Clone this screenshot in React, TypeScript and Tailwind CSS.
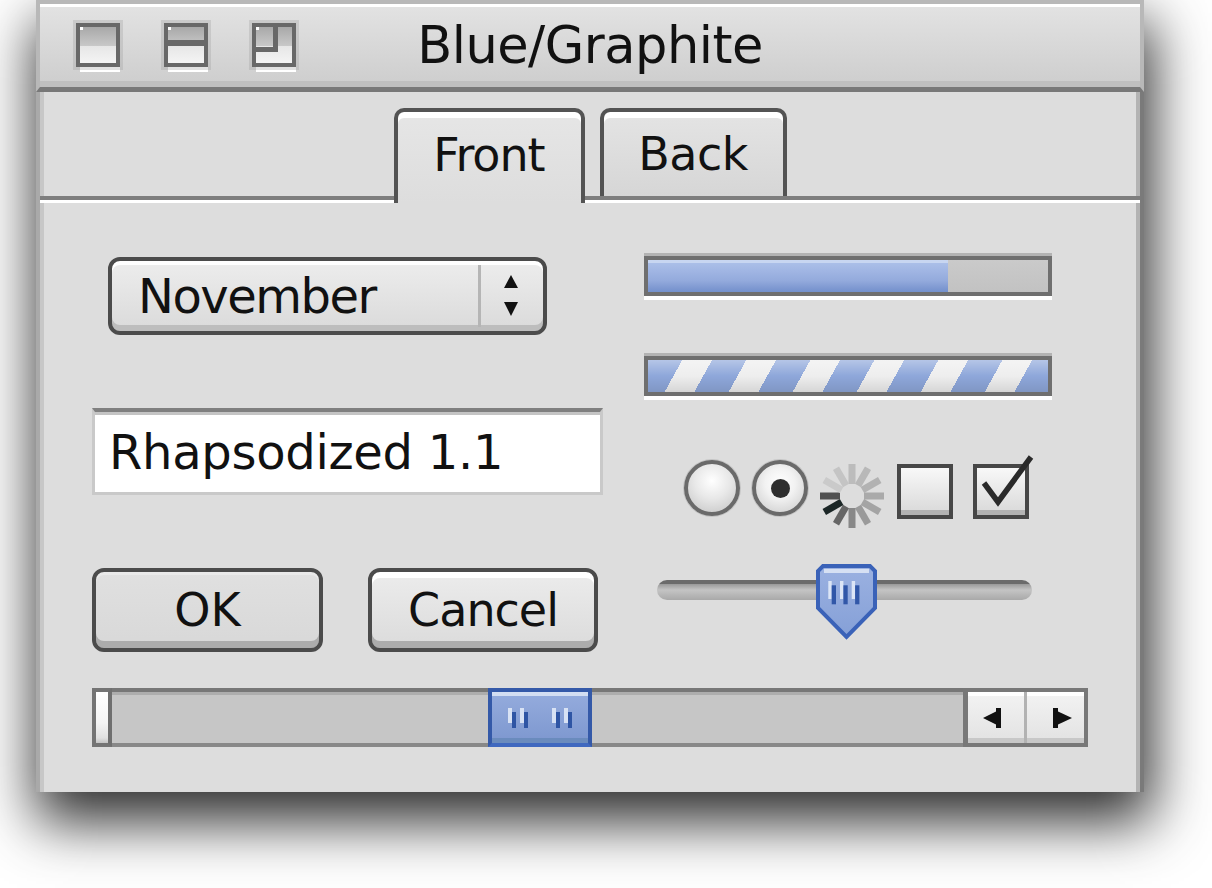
import React from "react";

function WinIcon({ kind }: { kind: 1 | 2 | 3 }) {
  return (
    <div className="flex flex-col items-end">
      <div className="relative w-[44px] h-[44px] border-4 border-[#686868] bg-[linear-gradient(#a8a8a8,#c8c8c8_52%,#e6e6e6_52%,#f4f4f4)] shadow-[0_0_0_3px_rgba(150,150,150,0.28)]">
        <div className="absolute left-0 top-0 w-[3px] h-[3px] bg-white" />
        {kind === 2 && <div className="absolute left-0 right-0 top-[13px] h-[6px] bg-[#686868]" />}
        {kind === 3 && (
          <div className="absolute left-0 top-0 w-[22px] h-[25px] border-r-[5px] border-b-[5px] border-[#686868]" />
        )}
      </div>
      <div className="w-[40px] h-[5px] bg-white" />
    </div>
  );
}

function TitleBar() {
  return (
    <div className="h-[92px] shrink-0 border-t-4 border-x-4 border-[#b8b8b8] border-b-[5px] border-b-[#787878] bg-[linear-gradient(#e3e3e3,#cdcdcd)] shadow-[inset_0_3px_0_#ffffff,inset_0_-6px_0_#bfbfbf] grid grid-cols-[1fr_auto_1fr] items-center">
      <div className="flex gap-[44px] pl-[36px] mt-[4px]">
        <WinIcon kind={1} />
        <WinIcon kind={2} />
        <WinIcon kind={3} />
      </div>
      <div className="text-[51px] leading-none tracking-[-0.5px]">Blue/Graphite</div>
      <div />
    </div>
  );
}

function TabStrip() {
  return (
    <div className="h-[111px] shrink-0 flex flex-col">
      <div className="flex-1 flex items-end justify-center gap-[15px]">
        <div className="relative z-10 w-[191px] h-[95px] mb-[-7px] pb-[6px] border-t-4 border-x-4 border-[#535353] rounded-t-[10px] bg-[linear-gradient(#e6e6e6,#dddddd)] shadow-[inset_0_6px_0_#ffffff] flex items-center justify-center text-[46px] leading-none tracking-[-1px]">
          Front
        </div>
        <div className="w-[187px] h-[88px] border-t-4 border-x-4 border-[#535353] rounded-t-[10px] bg-[linear-gradient(#e4e4e4,#d6d6d6)] shadow-[inset_0_6px_0_#ffffff] flex items-center justify-center text-[46px] leading-none tracking-[-0.5px]">
          Back
        </div>
      </div>
      <div className="h-[4px] bg-[#7e7e7e]" />
      <div className="h-[3px] bg-white" />
    </div>
  );
}

function Popup() {
  return (
    <div className="self-start ml-[16px] mt-[4px] w-[439px] h-[78px] border-4 border-[#4b4b4b] rounded-[12px] bg-[linear-gradient(#ededed,#dadada)] shadow-[inset_0_4px_0_#ffffff,inset_0_-6px_0_#bdbdbd] flex items-center">
      <div className="w-[366px] pl-[26px] text-[48px] leading-none tracking-[-1.5px]">November</div>
      <div className="w-[3px] self-stretch my-[4px] bg-[#b5b5b5]" />
      <div className="flex-1 flex justify-center pr-[2px]">
        <svg width="18" height="44" viewBox="0 0 18 44">
          <polygon points="9,1 16,14 2,14" fill="#111" />
          <polygon points="2,28 16,28 9,42" fill="#111" />
        </svg>
      </div>
    </div>
  );
}

function TextField() {
  return (
    <div className="mt-[73px] w-[511px] h-[87px] bg-white border-x-[3px] border-b-[3px] border-[#c9c9c9] border-t-4 border-t-[#7f7f7f] shadow-[inset_0_3px_0_#c4c4c4] flex items-center pl-[14px] text-[48px] leading-none tracking-[-0.3px]">
      Rhapsodized 1.1
    </div>
  );
}

function Buttons() {
  return (
    <div className="mt-[73px] flex gap-[45px]">
      <div className="w-[231px] h-[84px] border-4 border-[#4b4b4b] rounded-[12px] bg-[linear-gradient(#e0e0e0,#d8d8d8)] shadow-[inset_0_3px_0_#e9e9e9,inset_0_-7px_0_#acacac] flex items-center justify-center text-[46px] leading-none">
        OK
      </div>
      <div className="w-[230px] h-[84px] border-4 border-[#4b4b4b] rounded-[12px] bg-[linear-gradient(#ececec,#dbdbdb)] shadow-[inset_0_6px_0_#ffffff,inset_0_-7px_0_#acacac] flex items-center justify-center text-[46px] leading-none tracking-[-1px]">
        Cancel
      </div>
    </div>
  );
}

function Progress() {
  return (
    <div className="w-[408px] flex flex-col">
      <div className="h-[3px] bg-[#b3b3b3]" />
      <div className="h-[40px] border-4 border-[#6f6f6f] flex bg-[linear-gradient(#cacaca,#c2c2c2)]">
        <div className="w-[300px] bg-[linear-gradient(#c8d6f1_0%,#c8d6f1_9%,#abbfe8_9%,#a0b5e3_35%,#93aadc_65%,#7e98d1_88%,#7391cd_100%)]" />
      </div>
      <div className="h-[4px] bg-white" />
    </div>
  );
}

function Indeterminate() {
  return (
    <div className="mt-[53px] w-[408px] flex flex-col">
      <div className="h-[3px] bg-[#b3b3b3]" />
      <div className="h-[40px] border-4 border-[#6f6f6f] bg-[linear-gradient(rgba(255,255,255,0.35),rgba(255,255,255,0)_50%,rgba(0,0,0,0.1)),repeating-linear-gradient(119deg,#8ea7da_0px,#8ea7da_30px,#eeeeee_30px,#eeeeee_56px)]" />
      <div className="h-[4px] bg-white" />
    </div>
  );
}

const spokeColors = [
  "#bcbcbc",
  "#b8b8b8",
  "#b2b2b2",
  "#aaaaaa",
  "#a4a4a4",
  "#9a9a9a",
  "#888888",
  "#666666",
  "#1b2626",
  "#505050",
  "#cacaca",
  "#c4c4c4",
];

function Controls() {
  return (
    <div className="mt-[57px] h-[72px] flex items-start pl-[40px]">
      <div className="mt-[3px] w-[56px] h-[56px] rounded-full border-4 border-[#6a6a6a] bg-[radial-gradient(circle_at_50%_35%,#ffffff,#e8e8e8_45%,#c2c2c2)] shadow-[0_0_0_1px_#c4c4c4]" />
      <div className="ml-[12px] mt-[3px] w-[56px] h-[56px] rounded-full border-4 border-[#6a6a6a] bg-[radial-gradient(circle_at_50%_40%,#ffffff,#f2f2f2_40%,#c8c8c8)] shadow-[0_0_0_1px_#c4c4c4] flex items-center justify-center">
        <div className="w-[19px] h-[19px] rounded-full bg-[#2e2e2e]" />
      </div>
      <svg className="ml-[12px] mt-[6px]" width="64" height="66" viewBox="-32 -33 64 66">
        {spokeColors.map((c, i) => (
          <rect key={i} x={-3.5} y={-32} width={7} height={20} fill={c} transform={`rotate(${i * 30})`} />
        ))}
      </svg>
      <div className="ml-[13px] mt-[7px] w-[56px] h-[55px] border-4 border-[#474747] bg-[linear-gradient(#f8f8f8,#d8d8d8)] shadow-[inset_0_-5px_0_#b3b3b3]" />
      <div className="relative ml-[20px] mt-[7px] w-[56px] h-[55px] border-4 border-[#474747] bg-[linear-gradient(#f8f8f8,#d8d8d8)] shadow-[inset_0_-5px_0_#b3b3b3]">
        <svg className="absolute left-[-4px] top-[-14px]" width="64" height="66" viewBox="0 0 64 66">
          <polyline points="11,29 25,48 58,3" fill="none" stroke="#2a2a2a" strokeWidth="5.5" strokeLinejoin="miter" />
        </svg>
      </div>
    </div>
  );
}

function Slider() {
  return (
    <div className="mt-[35px] ml-[13px] relative w-[375px] h-[76px]">
      <div className="absolute left-0 right-0 top-[16px] h-[20px] rounded-full bg-[linear-gradient(#6b6b6b_0%,#6b6b6b_22%,#9c9c9c_22%,#c4c4c4_50%,#a9a9a9_100%)]" />
      <svg className="absolute left-[159px] top-0" width="61" height="76" viewBox="0 0 61 76">
        <defs>
          <linearGradient id="thumbFill" x1="0" y1="0" x2="0" y2="1">
            <stop offset="0" stopColor="#9bb1e1" />
            <stop offset="1" stopColor="#85a0d7" />
          </linearGradient>
        </defs>
        <polygon points="7,2 54,2 59,7 59,44 30.5,73 2,44 2,7" fill="url(#thumbFill)" stroke="#3a62b8" strokeWidth="4" strokeLinejoin="miter" />
        <rect x="8" y="5" width="45" height="4" fill="#d6e0f3" />
        <rect x="12.3" y="17" width="3.4" height="18" fill="#dce5f6" />
        <rect x="15.7" y="21.3" width="4.3" height="19" fill="#3157a8" />
        <rect x="24" y="17" width="3.4" height="18" fill="#dce5f6" />
        <rect x="27.4" y="21.3" width="4.3" height="19" fill="#3157a8" />
        <rect x="35.7" y="17" width="3.4" height="18" fill="#dce5f6" />
        <rect x="39.1" y="21.3" width="4.3" height="19" fill="#3157a8" />
      </svg>
    </div>
  );
}

function Grip() {
  return (
    <div className="relative h-[20px] flex">
      <div className="w-[4px] h-[15px] self-start bg-[#d8e2f4]" />
      <div className="w-[4px] h-[16px] self-end bg-[#2f55a4]" />
      <div className="ml-[4px] w-[4px] h-[15px] self-start bg-[#d8e2f4]" />
      <div className="w-[4px] h-[16px] self-end bg-[#2f55a4]" />
    </div>
  );
}

function ScrollBar() {
  return (
    <div className="mt-[36px] w-[996px] h-[59px] flex">
      <div className="w-[20px] border-4 border-[#747474] border-r-[#6f6f6f] bg-[linear-gradient(#ffffff,#f4f4f4_60%,#e0e0e0_90%,#c4c4c4)]" />
      <div className="w-[376px] border-t-4 border-t-[#777777] border-b-4 border-b-[#888888] bg-[#c6c6c6] shadow-[inset_0_3px_0_#adadad]" />
      <div className="w-[104px] border-4 border-[#3459a8] border-b-[#3f68bf] bg-[linear-gradient(#95acdd,#7d97cf)] shadow-[inset_0_4px_0_#d3def2,inset_0_-5px_0_#6a8bbd] flex items-center justify-center gap-[24px]">
        <Grip />
        <Grip />
      </div>
      <div className="flex-1 border-t-4 border-t-[#777777] border-b-4 border-b-[#888888] bg-[#c6c6c6] shadow-[inset_0_3px_0_#adadad]" />
      <div className="w-[125px] flex border-t-4 border-b-4 border-l-[5px] border-r-4 border-[#787878]">
        <div className="w-[56px] flex items-center pl-[15px] bg-[linear-gradient(#f3f3f3,#e2e2e2)] shadow-[inset_0_4px_0_#ffffff,inset_0_-5px_0_#c8c8c8]">
          <svg width="20" height="20" viewBox="0 0 20 20">
            <polygon points="0,10 14,3 14,17" fill="#111" />
            <rect x="13" y="0" width="5" height="20" fill="#111" />
          </svg>
        </div>
        <div className="w-[3px] bg-[#b2b2b2]" />
        <div className="flex-1 flex items-center pl-[25px] bg-[linear-gradient(#f3f3f3,#e2e2e2)] shadow-[inset_0_4px_0_#ffffff,inset_0_-5px_0_#c8c8c8]">
          <svg width="20" height="20" viewBox="0 0 20 20">
            <rect x="1" y="0" width="5" height="20" fill="#111" />
            <polygon points="5,3 20,10 5,17" fill="#111" />
          </svg>
        </div>
      </div>
    </div>
  );
}

function Body() {
  return (
    <div className="flex-1 pl-[52px] pt-[50px]">
      <div className="flex items-start">
        <div className="w-[511px] flex flex-col">
          <Popup />
          <TextField />
          <Buttons />
        </div>
        <div className="ml-[41px] w-[408px] flex flex-col">
          <Progress />
          <Indeterminate />
          <Controls />
          <Slider />
        </div>
      </div>
      <ScrollBar />
    </div>
  );
}

export default function App() {
  return (
    <div className="w-[1212px] h-[888px] bg-white overflow-hidden font-['DejaVu_Sans',sans-serif] text-[#111]">
      <div className="ml-[36px] w-[1108px] h-[792px] flex flex-col bg-[#dddddd] shadow-[4px_26px_54px_4px_rgba(0,0,0,0.82)]">
        <TitleBar />
        <div className="flex-1 flex flex-col border-l-4 border-l-[#a9a9a9] border-r-4 border-r-[#7a7a7a] shadow-[inset_4px_0_0_#c7c7c7,inset_-4px_0_0_#b3b3b3]">
          <TabStrip />
          <Body />
        </div>
      </div>
    </div>
  );
}
